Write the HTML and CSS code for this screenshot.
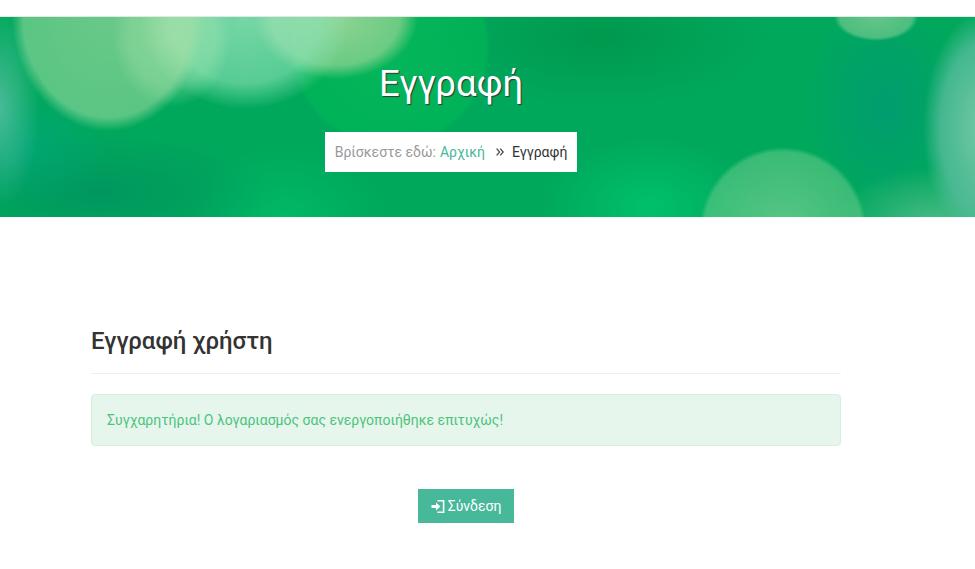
FILE: index.html
```html
<!DOCTYPE html>
<html lang="el">
<head>
  <meta charset="UTF-8" />
  <meta name="viewport" content="width=device-width, initial-scale=1.0"/>
  <title>Εγγραφή</title>
  <link rel="stylesheet" href="styles.css">
</head>
<body>
  <div class="topbar"></div>

  <div class="hero">
    <div class="hero-inner">
      <h1>Εγγραφή</h1>
      <div class="breadcrumb">
        <span class="here">Βρίσκεστε εδώ:</span>
        <a href="#">Αρχική</a>
        <svg class="sep" width="8" height="8" viewBox="0 0 8 8" fill="none" stroke="#444" stroke-width="1.2">
          <path d="M0.6 0.6L3.6 4L0.6 7.4M4.2 0.6L7.2 4L4.2 7.4"/>
        </svg>
        <span class="current">Εγγραφή</span>
      </div>
    </div>
  </div>

  <div class="content">
    <h2>Εγγραφή χρήστη</h2>
    <div class="alert">Συγχαρητήρια! Ο λογαριασμός σας ενεργοποιήθηκε επιτυχώς!</div>
    <div class="actions">
      <a class="btn-login" href="#">
        <svg width="14" height="13" viewBox="0 0 14 13" fill="none" stroke="#fff" stroke-width="1.6">
          <path d="M6.5 0.8H12.6V12.2H6.5"/>
          <path d="M0.5 5.1H5V2.4L9.4 6.5L5 10.6V7.9H0.5Z" fill="#fff" stroke="none"/>
        </svg>
        Σύνδεση
      </a>
    </div>
  </div>
</body>
</html>
```

FILE: styles.css
```css
body {
  margin: 0;
  font-family: Roboto, "Liberation Sans", sans-serif;
  background: #fff;
  color: #333;
}

.topbar {
  height: 16px;
  border-bottom: 1px solid #e6e6e6;
}

.hero {
  height: 200px;
  background-color: #00a85c;
  background-image:
    radial-gradient(ellipse 96px 114px at 108px 0, rgba(175, 222, 165, 0.6) 0, rgba(165, 222, 165, 0.55) 88%, rgba(165, 222, 165, 0) 100%),
    radial-gradient(ellipse 60px 70px at 172px 20px, rgba(190, 240, 190, 0.5) 0, rgba(190, 240, 190, 0.3) 72%, rgba(190, 240, 190, 0) 100%),
    radial-gradient(ellipse 105px 92px at 245px 0, rgba(165, 232, 195, 0.72) 0, rgba(145, 228, 185, 0.6) 72%, rgba(145, 228, 185, 0) 100%),
    radial-gradient(ellipse 82px 62px at 336px 0, rgba(190, 222, 165, 0.75) 0, rgba(190, 222, 165, 0.55) 78%, rgba(190, 222, 165, 0) 100%),
    radial-gradient(circle 100px at 390px 30px, rgba(10, 190, 90, 0.6) 0, rgba(0, 185, 85, 0.6) 96%, rgba(0, 185, 85, 0) 100%),
    radial-gradient(circle 84px at 783px 214px, rgba(125, 210, 150, 0.72) 0, rgba(95, 200, 135, 0.6) 94%, rgba(95, 200, 135, 0) 100%),
    radial-gradient(ellipse 42px 24px at 876px 0, rgba(125, 205, 145, 0.8) 0, rgba(110, 200, 140, 0.7) 86%, rgba(110, 200, 140, 0) 100%),
    radial-gradient(ellipse 62px 118px at 985px 112px, rgba(130, 205, 175, 0.9) 0, rgba(85, 188, 155, 0.8) 72%, rgba(70, 185, 140, 0) 100%),
    radial-gradient(ellipse 100px 55px at 935px 205px, rgba(85, 190, 140, 0.85) 0, rgba(70, 185, 135, 0) 100%),
    radial-gradient(ellipse 40px 100px at 0 90px, rgba(85, 190, 160, 0.85) 0, rgba(0, 170, 125, 0) 100%),
    radial-gradient(ellipse 90px 60px at 20px 130px, rgba(0, 165, 125, 0.7) 0, rgba(0, 165, 125, 0) 100%),
    radial-gradient(ellipse 170px 60px at 100px 175px, rgba(0, 145, 95, 0.75) 0, rgba(0, 145, 95, 0) 100%),
    radial-gradient(ellipse 100px 70px at 285px 200px, rgba(0, 190, 105, 0.75) 0, rgba(0, 190, 105, 0) 100%),
    radial-gradient(ellipse 110px 70px at 650px 190px, rgba(0, 195, 110, 0.9) 0, rgba(0, 195, 110, 0) 100%),
    radial-gradient(ellipse 170px 70px at 600px 20px, rgba(0, 150, 75, 0.85) 0, rgba(0, 150, 75, 0) 100%),
    radial-gradient(ellipse 80px 110px at 885px 90px, rgba(0, 155, 115, 0.85) 0, rgba(0, 155, 115, 0) 100%);
}

.hero-inner {
  width: 902px;
  padding-top: 43px;
  display: flex;
  flex-direction: column;
  align-items: center;
}

h1 {
  margin: 0 0 24px;
  font-size: 36.5px;
  font-weight: 400;
  line-height: 48px;
  color: #fff;
  text-shadow: 1px 1px 1px #333;
}

.breadcrumb {
  display: flex;
  align-items: center;
  height: 40px;
  padding: 0 10px;
  background: #fff;
  font-size: 14px;
}

.here {
  color: #999;
  margin-right: 4px;
}

.breadcrumb a {
  color: #47b89a;
  text-decoration: none;
}

.sep {
  margin: 0 8px 0 11px;
}

.current {
  color: #333;
}

.content {
  width: 750px;
  margin-left: 91px;
  padding-top: 107px;
}

h2 {
  margin: 0;
  padding-bottom: 15px;
  border-bottom: 1px solid #eee;
  font-size: 24px;
  font-weight: 500;
  line-height: 34px;
  color: #333;
}

.alert {
  margin-top: 20px;
  padding: 15px;
  border: 1px solid #d3f0df;
  border-radius: 4px;
  background: #e6f6ec;
  color: #4cc37d;
  font-size: 14px;
  line-height: 20px;
}

.actions {
  margin-top: 43px;
  text-align: center;
}

.btn-login {
  display: inline-flex;
  align-items: center;
  gap: 3px;
  height: 34px;
  padding: 0 13px;
  background: #47b89a;
  color: #fff;
  font-size: 14px;
  text-decoration: none;
}
```
